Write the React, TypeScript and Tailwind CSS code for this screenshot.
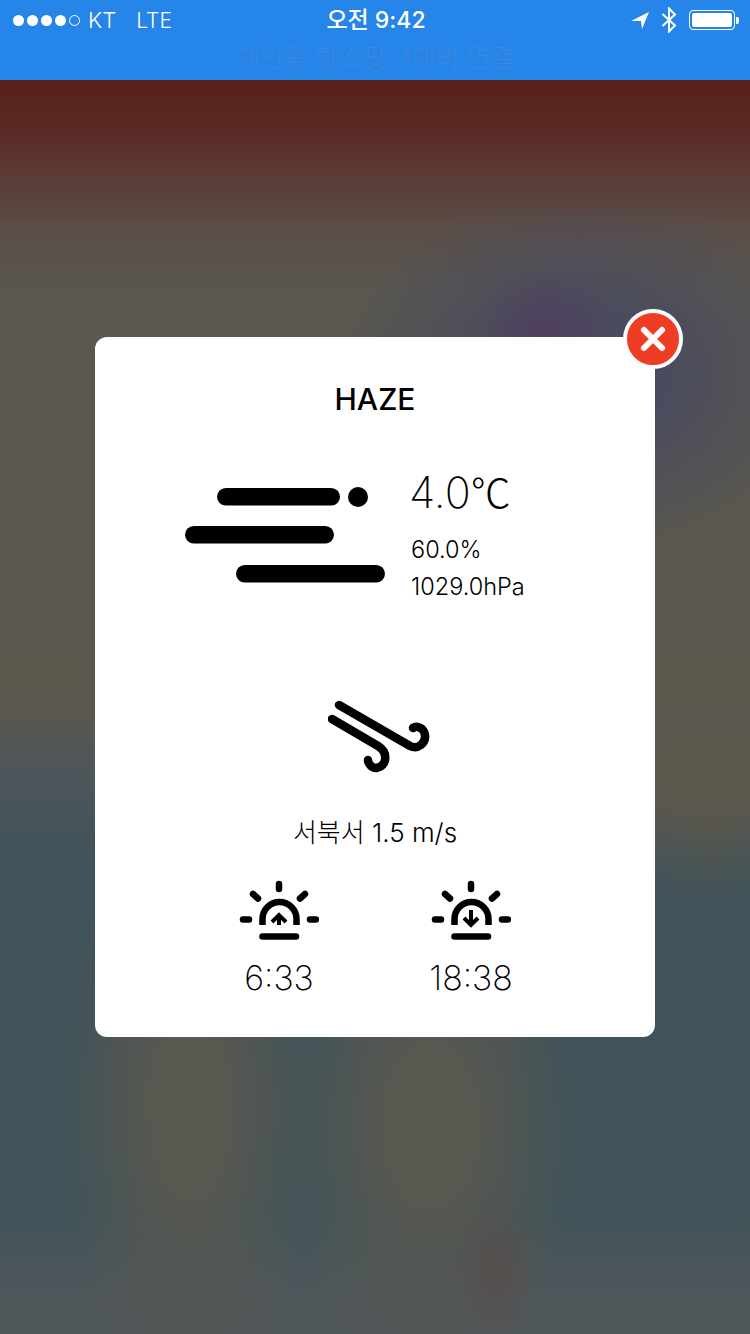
import React from 'react'

const FONT = "font-['Inter','Noto_Sans_CJK_KR',sans-serif]"

function SignalDots() {
  return (
    <div className="flex items-center gap-[3px]">
      <span className="w-[11px] h-[11px] rounded-full bg-white" />
      <span className="w-[11px] h-[11px] rounded-full bg-white" />
      <span className="w-[11px] h-[11px] rounded-full bg-white" />
      <span className="w-[11px] h-[11px] rounded-full bg-white" />
      <span className="w-[11px] h-[11px] rounded-full border border-white" />
    </div>
  )
}

function StatusIcons() {
  return (
    <div className="flex items-center">
      <svg width="18" height="17" viewBox="0 0 18 17" className="mr-[12px]">
        <path d="M0 9 L18 0 L11 17 L10 9 Z" fill="#fff" />
      </svg>
      <svg width="16" height="26" viewBox="0 0 16 26" className="mr-[12px]">
        <path d="M1.5 7 L14 18.5 L8 24.5 V1.5 L14 7.5 L1.5 19" fill="none" stroke="#fff" strokeWidth="2" />
      </svg>
      <div className="w-[46px] h-[20px] rounded-[4px] border border-white p-[2px]">
        <div className="w-full h-full rounded-[2px] bg-white" />
      </div>
      <span className="w-[3px] h-[7px] ml-[1px] rounded-r-[2px] bg-white" />
    </div>
  )
}

function HazeIcon() {
  return (
    <svg width="200" height="96" viewBox="0 0 200 96" className="shrink-0">
      <rect x="32" y="1" width="123" height="17.5" rx="8.75" fill="#000" />
      <circle cx="173" cy="10" r="10" fill="#000" />
      <rect x="0" y="39" width="149" height="17.5" rx="8.75" fill="#000" />
      <rect x="51" y="78" width="149" height="17.5" rx="8.75" fill="#000" />
    </svg>
  )
}

function WindIcon() {
  return (
    <svg width="104" height="74" viewBox="0 0 104 74">
      <g fill="none" stroke="#000" strokeWidth="8.5" strokeLinecap="round">
        <path d="M11 5 L82 46 C90 50 98 43 97 35 C96 28 89 25 85 28" />
        <path d="M4 19 L50 46 C60 52 60 66 48 68 C44 68 40 64 40 60" />
      </g>
    </svg>
  )
}

function SunIcon({ down }: { down?: boolean }) {
  return (
    <svg width="80" height="60" viewBox="0 0 80 60">
      <g fill="none" stroke="#000" strokeLinecap="round">
        <g strokeWidth="6.5">
          <path d="M40 4 V9" />
          <path d="M14 14 L19 18.5" />
          <path d="M66 14 L61 18.5" />
          <path d="M4 39.5 H10" />
          <path d="M71 39.5 H77" />
          <path d="M23.5 56.5 H57" />
        </g>
        <path d="M23.5 45 V39 A17 17 0 0 1 57.5 39 V45" strokeWidth="6.5" strokeLinecap="butt" />
        {down ? (
          <path d="M40 30 V44 M33 38 L40 45 L47 38" strokeWidth="4" strokeLinecap="butt" />
        ) : (
          <path d="M40 45 V36 M33 42 L40 35 L47 42" strokeWidth="4" strokeLinecap="butt" />
        )}
      </g>
    </svg>
  )
}

export default function App() {
  return (
    <div
      className={`${FONT} relative h-[1334px] w-[750px] overflow-hidden bg-[radial-gradient(45px_75px_at_495px_1270px,#564e4d,transparent),radial-gradient(150px_260px_at_430px_1125px,#595850_25%,transparent),radial-gradient(130px_300px_at_190px_1105px,#595850_25%,transparent),radial-gradient(70px_70px_at_545px_335px,#503f5e,transparent),radial-gradient(240px_180px_at_580px_375px,#4a4b5e_35%,transparent),radial-gradient(180px_130px_at_710px_770px,#5b574d_30%,transparent),linear-gradient(to_bottom,#581f1b_80px,#5b2a25_130px,#5b3c36_180px,#5a4e48_230px,#59574f_290px,#5b584e_700px,#4e565a_770px,#40525a_860px,#3f5359_1210px,#50575b_1300px)]`}
    >
      {/* Status bar with hotspot line */}
      <div className="h-[80px] bg-[#2585e8] text-white">
        <div className="flex h-[40px] items-center justify-between pl-[13px] pr-[11px]">
          <div className="flex flex-1 items-center">
            <SignalDots />
            <span className="ml-[8px] text-[22px] font-light leading-none">KT</span>
            <span className="ml-[20px] text-[21px] font-light leading-none">LTE</span>
          </div>
          <span className="text-[23px] font-medium leading-none">오전 9:42</span>
          <div className="flex flex-1 justify-end">
            <StatusIcons />
          </div>
        </div>
        <p className="text-center text-[26px] font-light leading-[36px] text-[#3f86dc]">개인용 핫스팟: 1개의 연결</p>
      </div>

      {/* Weather detail card */}
      <div className="relative mx-auto mt-[257px] flex h-[700px] w-[560px] flex-col items-center rounded-[12px] bg-white pt-[44px] text-black">
        <button className="absolute -right-[28px] -top-[28px] flex h-[60px] w-[60px] items-center justify-center rounded-full border-[4px] border-white bg-[#ee3d24]">
          <svg width="28" height="28" viewBox="0 0 28 28">
            <path d="M5 5 L23 23 M23 5 L5 23" stroke="#fff" strokeWidth="6" strokeLinecap="round" />
          </svg>
        </button>

        <h1 className="text-[30px] font-medium leading-[36px]">HAZE</h1>

        <div className="mt-[49px] flex w-full pl-[90px]">
          <div className="pt-[21px]">
            <HazeIcon />
          </div>
          <div className="ml-[26px] font-light">
            <p className="-ml-[2px] text-[43px] font-extralight leading-[50px]">
              4.0<span className="font-['Noto_Sans_CJK_KR',sans-serif] text-[40px]">℃</span>
            </p>
            <p className="mt-[19px] text-[23.5px] leading-[28px]">60.0%</p>
            <p className="mt-[9px] text-[23.5px] leading-[28px]">1029.0hPa</p>
          </div>
        </div>

        <div className="ml-[10px] mt-[99px]">
          <WindIcon />
        </div>
        <p className="mt-[43px] text-[26px] font-light leading-[32px]">서북서 1.5 m/s</p>

        <div className="mt-[31px] flex gap-[96px]">
          <div className="flex w-[96px] flex-col items-center">
            <SunIcon />
            <span className="mt-[18px] text-[34px] font-extralight leading-[40px]">6:33</span>
          </div>
          <div className="flex w-[96px] flex-col items-center">
            <SunIcon down />
            <span className="mt-[18px] text-[34px] font-extralight leading-[40px]">18:38</span>
          </div>
        </div>
      </div>
    </div>
  )
}
